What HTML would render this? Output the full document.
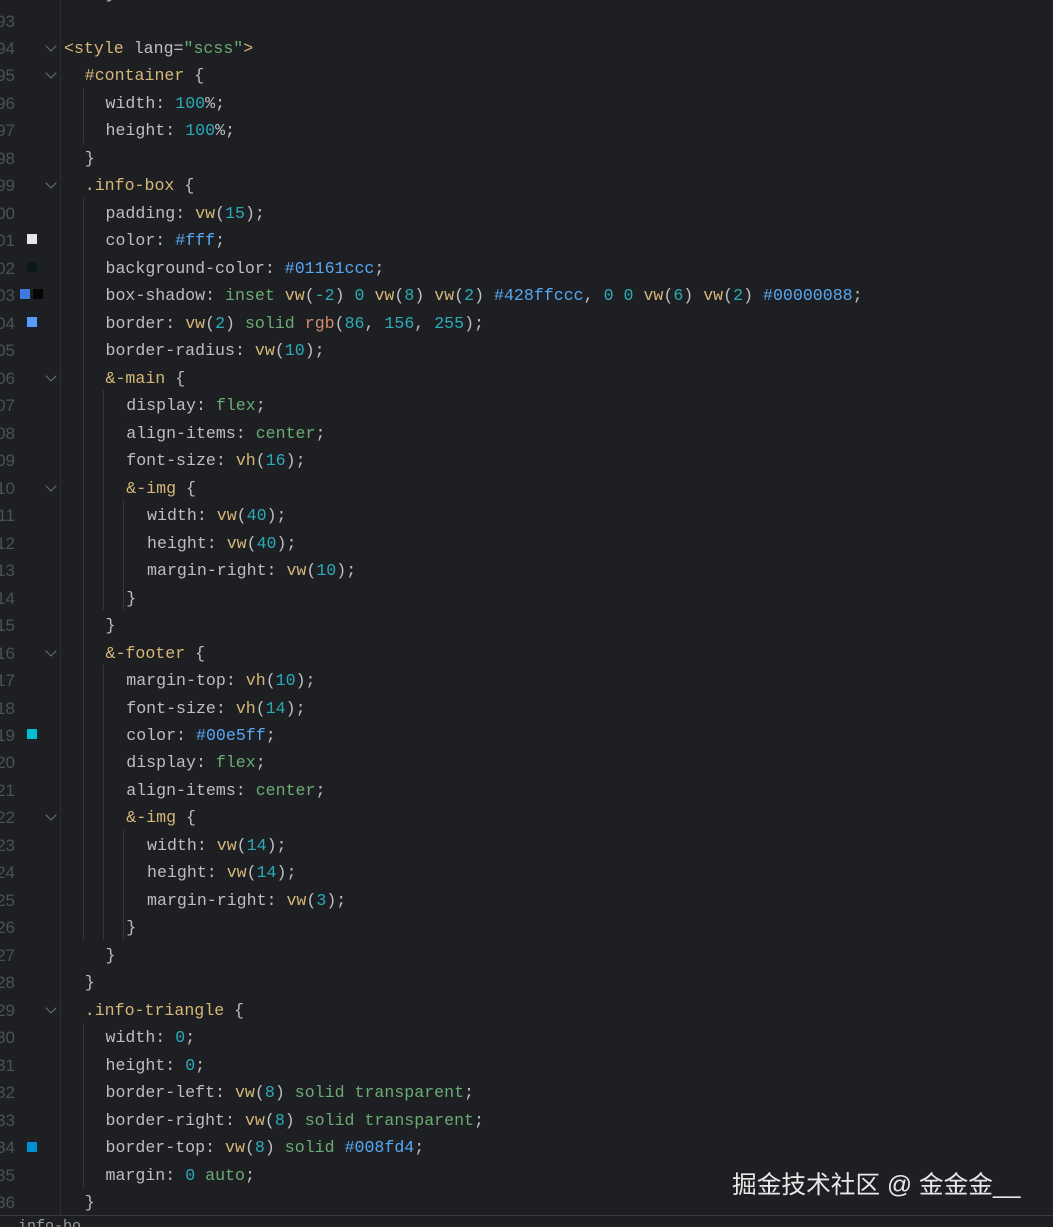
<!DOCTYPE html>
<html><head><meta charset="utf-8"><style>
html,body{margin:0;padding:0;overflow:hidden;height:1227px}
body{width:1053px;height:1227px;background:#1e1f22;position:relative;overflow:hidden;font-family:"Liberation Mono",monospace;font-size:16.6px;color:#bcbec4}
.l{position:absolute;left:64px;height:27.48px;line-height:27.48px;white-space:pre}
.n{position:absolute;right:1038px;height:27.48px;line-height:27.48px;color:#4b5059;text-align:right;font-family:"Liberation Sans",sans-serif;font-size:17px}
.g{position:absolute;left:60px;top:0;width:1px;height:1215px;background:#2b2d30}
.ig{position:absolute;width:1px;background:#34363a}
.fa{position:absolute;left:47px;width:7px;height:7px;border-right:1.3px solid #6f737a;border-bottom:1.3px solid #6f737a;transform:rotate(45deg)}
.sw{position:absolute;width:10px;height:10px}
.s{color:#d5b778}.k{color:#6aab73}.u{color:#2aacb8}.h{color:#56a8f5}.f{color:#d5b778}.r{color:#cf8e6d}
</style></head><body>
<div class="g"></div>
<div class="ig" style="left:83px;top:88px;height:55px"></div>
<div class="ig" style="left:83px;top:198px;height:742px"></div>
<div class="ig" style="left:103px;top:390px;height:220px"></div>
<div class="ig" style="left:123px;top:500px;height:110px"></div>
<div class="ig" style="left:103px;top:665px;height:275px"></div>
<div class="ig" style="left:123px;top:830px;height:110px"></div>
<div class="ig" style="left:83px;top:1023px;height:165px"></div>

<div class="sw" style="left:27px;top:234px;background:#e6e6e6"></div>
<div class="sw" style="left:27px;top:262px;background:#0a1a1c"></div>
<div class="sw" style="left:20px;top:289px;background:#3d7be0"></div>
<div class="sw" style="left:33px;top:289px;background:#050505"></div>
<div class="sw" style="left:27px;top:317px;background:#569cff"></div>
<div class="sw" style="left:27px;top:729px;background:#00bcd4"></div>
<div class="sw" style="left:27px;top:1142px;background:#008fd4"></div>

<div id="c"></div>
<div style="position:absolute;left:0;top:1215px;width:1053px;height:1px;background:#393b40"></div>
<div style="position:absolute;left:732px;top:1165px;font-family:'Liberation Sans','Noto Sans CJK SC',sans-serif;font-size:24.7px;color:#e8e8e8;white-space:nowrap">掘金技术社区 @ 金金金__</div>
<script>
var L={
92:[2,'}'],93:[0,''],
94:[0,'<span class="s">&lt;style</span> lang=<span class="k">"scss"</span><span class="s">&gt;</span>'],
95:[1,'<span class="s">#container</span> {'],
96:[2,'width: <span class="u">100</span>%;'],
97:[2,'height: <span class="u">100</span>%;'],
98:[1,'}'],
99:[1,'<span class="s">.info-box</span> {'],
100:[2,'padding: <span class="f">vw</span>(<span class="u">15</span>);'],
101:[2,'color: <span class="h">#fff</span>;'],
102:[2,'background-color: <span class="h">#01161ccc</span>;'],
103:[2,'box-shadow: <span class="k">inset</span> <span class="f">vw</span>(<span class="u">-2</span>) <span class="u">0</span> <span class="f">vw</span>(<span class="u">8</span>) <span class="f">vw</span>(<span class="u">2</span>) <span class="h">#428ffccc</span>, <span class="u">0</span> <span class="u">0</span> <span class="f">vw</span>(<span class="u">6</span>) <span class="f">vw</span>(<span class="u">2</span>) <span class="h">#00000088</span>;'],
104:[2,'border: <span class="f">vw</span>(<span class="u">2</span>) <span class="k">solid</span> <span class="r">rgb</span>(<span class="u">86</span>, <span class="u">156</span>, <span class="u">255</span>);'],
105:[2,'border-radius: <span class="f">vw</span>(<span class="u">10</span>);'],
106:[2,'<span class="s">&amp;-main</span> {'],
107:[3,'display: <span class="k">flex</span>;'],
108:[3,'align-items: <span class="k">center</span>;'],
109:[3,'font-size: <span class="f">vh</span>(<span class="u">16</span>);'],
110:[3,'<span class="s">&amp;-img</span> {'],
111:[4,'width: <span class="f">vw</span>(<span class="u">40</span>);'],
112:[4,'height: <span class="f">vw</span>(<span class="u">40</span>);'],
113:[4,'margin-right: <span class="f">vw</span>(<span class="u">10</span>);'],
114:[3,'}'],115:[2,'}'],
116:[2,'<span class="s">&amp;-footer</span> {'],
117:[3,'margin-top: <span class="f">vh</span>(<span class="u">10</span>);'],
118:[3,'font-size: <span class="f">vh</span>(<span class="u">14</span>);'],
119:[3,'color: <span class="h">#00e5ff</span>;'],
120:[3,'display: <span class="k">flex</span>;'],
121:[3,'align-items: <span class="k">center</span>;'],
122:[3,'<span class="s">&amp;-img</span> {'],
123:[4,'width: <span class="f">vw</span>(<span class="u">14</span>);'],
124:[4,'height: <span class="f">vw</span>(<span class="u">14</span>);'],
125:[4,'margin-right: <span class="f">vw</span>(<span class="u">3</span>);'],
126:[3,'}'],127:[2,'}'],128:[1,'}'],
129:[1,'<span class="s">.info-triangle</span> {'],
130:[2,'width: <span class="u">0</span>;'],
131:[2,'height: <span class="u">0</span>;'],
132:[2,'border-left: <span class="f">vw</span>(<span class="u">8</span>) <span class="k">solid transparent</span>;'],
133:[2,'border-right: <span class="f">vw</span>(<span class="u">8</span>) <span class="k">solid transparent</span>;'],
134:[2,'border-top: <span class="f">vw</span>(<span class="u">8</span>) <span class="k">solid</span> <span class="h">#008fd4</span>;'],
135:[2,'margin: <span class="u">0</span> <span class="k">auto</span>;'],
136:[1,'}']
};
var folds=[94,95,99,106,110,116,122,129];
var h='';
for(var n=92;n<=136;n++){
 var t=35+(n-94)*27.48;
 var e=L[n];
 h+='<div class="l" style="top:'+t+'px;left:'+(64+e[0]*20.76)+'px">'+e[1]+'</div>';
 if(n>=93)h+='<div class="n" style="top:'+t+'px">'+n+'</div>';
 if(folds.indexOf(n)>=0)h+='<div class="fa" style="top:'+(t+7)+'px"></div>';
}
h+='<div class="l" style="top:1217px;left:0;height:10px;overflow:hidden;color:#9a9da3;font-size:15px;line-height:20px">  info-bo</div>';
document.getElementById('c').innerHTML=h;
</script>
</body></html>
